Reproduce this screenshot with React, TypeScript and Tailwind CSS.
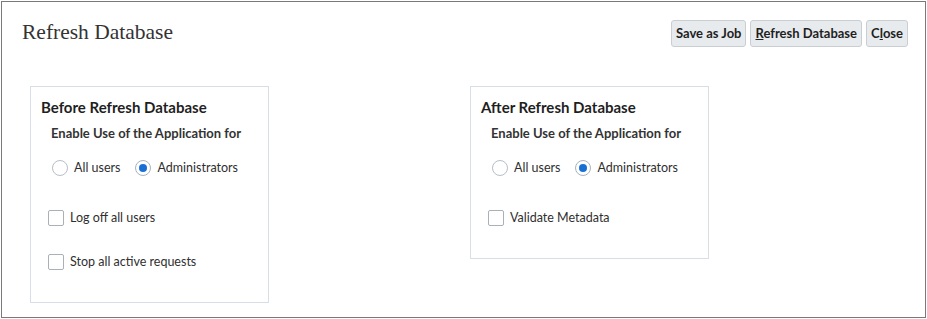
const sans = "font-['Lato','Noto_Sans',sans-serif]";

const Radio = ({ label, checked }: { label: string; checked?: boolean }) => (
  <label className="flex items-center gap-[6px]">
    <span
      className={`flex size-4 items-center justify-center rounded-full border ${
        checked ? "border-[#a9b3bc]" : "border-[#b7bfc6]"
      } bg-white`}
    >
      {checked && <span className="size-2 rounded-full bg-[#1870d5]" />}
    </span>
    <span className="text-[12.5px] text-[#2f2f2f]">{label}</span>
  </label>
);

const Checkbox = ({ label }: { label: string }) => (
  <label className="flex items-center gap-[6px]">
    <span className="size-4 rounded-[2px] border border-[#a9b0b6] bg-white" />
    <span className="text-[12.5px] leading-5 text-[#2f2f2f]">{label}</span>
  </label>
);

const Panel = ({
  title,
  checks,
  className,
}: {
  title: string;
  checks: string[];
  className: string;
}) => (
  <section className={`w-[239px] border border-[#d7dee5] ${className}`}>
    <h2 className="pl-[10px] pt-[10px] text-[15px] leading-5 font-bold text-[#1f1f1f]">{title}</h2>
    <p className="mt-[6px] pl-5 text-[13px] leading-5 font-bold text-[#333]">Enable Use of the Application for</p>
    <div className="mt-[16px] flex gap-[15px] pl-[21px]">
      <Radio label="All users" />
      <Radio label="Administrators" checked />
    </div>
    <div className="mt-[30px] flex flex-col gap-[24px] pl-[17px]">
      {checks.map((c) => (
        <Checkbox key={c} label={c} />
      ))}
    </div>
  </section>
);

const btn =
  "h-[27px] rounded-[3px] border border-[#c9ced3] bg-[#e8ebed] px-[4px] text-[13px] font-bold text-[#1f1f1f]";

export default function App() {
  return (
    <div className={`bg-white p-px ${sans}`}>
      <div className="h-[317px] w-[925px] border border-[#7a7a7a]">
        <header className="flex items-start justify-between pl-5 pr-[17px] pt-[18px]">
          <h1 className="font-['Liberation_Serif',serif] text-[21.5px] leading-6 text-[#333]">Refresh Database</h1>
          <div className="flex gap-1">
            <button className={btn}>Save as Job</button>
            <button className={btn}>
              <span className="underline">R</span>efresh Database
            </button>
            <button className={btn}>
              C<span className="underline">l</span>ose
            </button>
          </div>
        </header>
        <div className="mt-[39px] flex items-start gap-[201px] pl-[28px]">
          <Panel
            title="Before Refresh Database"
            checks={["Log off all users", "Stop all active requests"]}
            className="h-[217px]"
          />
          <Panel title="After Refresh Database" checks={["Validate Metadata"]} className="h-[173px]" />
        </div>
      </div>
    </div>
  );
}
